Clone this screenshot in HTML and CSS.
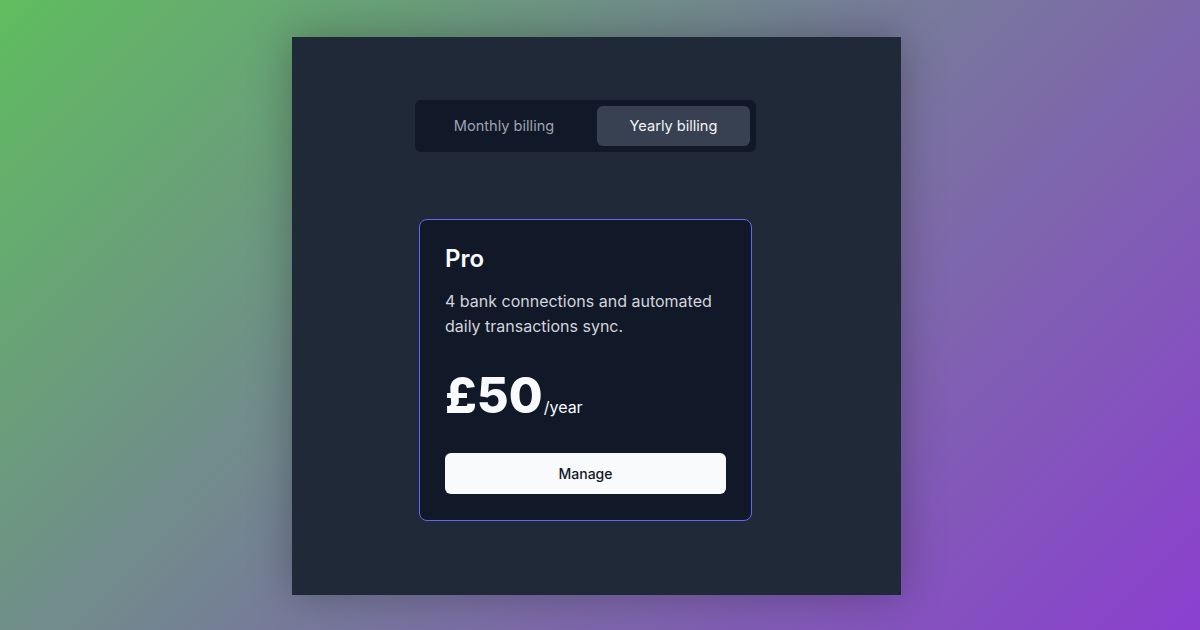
FILE: index.html
```html
<!DOCTYPE html>
<html lang="en">
<head>
<meta charset="utf-8">
<title>Pricing</title>
<link rel="stylesheet" href="styles.css">
</head>
<body>
  <main class="panel">
    <div class="column">
      <div class="toggle">
        <button class="toggle-btn">Monthly billing</button>
        <button class="toggle-btn active">Yearly billing</button>
      </div>
      <section class="card">
        <h2 class="plan-name">Pro</h2>
        <p class="plan-desc">4 bank connections and automated daily transactions sync.</p>
        <div class="price"><span class="amount">£50</span><span class="period">/year</span></div>
        <button class="manage">Manage</button>
      </section>
    </div>
  </main>
</body>
</html>
```
FILE: styles.css
```css
* { box-sizing: border-box; }
html, body { margin: 0; padding: 0; }
body {
  width: 1200px;
  height: 630px;
  overflow: hidden;
  font-family: Inter, "Noto Sans", sans-serif;
  background: linear-gradient(135deg, #5fbd5f 0%, #767d98 48%, #8b3fcf 100%);
  padding: 37px 0 0 292px;
  display: flex;
  align-items: flex-start;
}
.panel {
  width: 609px;
  height: 558px;
  background: #1f2937;
  box-shadow: 0 0 40px rgba(0, 0, 0, 0.28);
  padding: 63px 0 0 123px;
}
.column {
  width: 341px;
  display: flex;
  flex-direction: column;
  align-items: flex-start;
}
.toggle {
  width: 341px;
  display: flex;
  gap: 10px;
  padding: 6px;
  background: #111827;
  border-radius: 6px;
}
.toggle-btn {
  font-family: inherit;
  font-size: 14.6px;
  line-height: 22px;
  padding: 9px 0;
  border: 0;
  border-radius: 6px;
  background: transparent;
  color: #9ca3af;
  flex: 0 0 166px;
  cursor: pointer;
}
.toggle-btn.active {
  flex: 0 0 153px;
  background: #374151;
  color: #f3f4f6;
}
.card {
  margin: 67px 0 0 4px;
  width: 333px;
  background: #111827;
  border: 1px solid #6366f1;
  border-radius: 8px;
  padding: 23px 25px 26px 25px;
}
.plan-name {
  margin: 0;
  font-size: 24px;
  line-height: 32px;
  font-weight: 600;
  color: #f9fafb;
}
.plan-desc {
  margin: 14px 0 0;
  font-size: 16px;
  line-height: 25px;
  color: #d1d5db;
}
.price {
  margin-top: 33px;
  display: flex;
  align-items: baseline;
  color: #f9fafb;
}
.amount {
  font-size: 49px;
  line-height: 48px;
  font-weight: 800;
}
.period {
  font-size: 16px;
  line-height: 24px;
  margin-left: 1px;
}
.manage {
  margin-top: 33px;
  width: 100%;
  display: block;
  font-family: inherit;
  font-size: 14px;
  font-weight: 500;
  line-height: 21px;
  padding: 10px 0;
  border: 0;
  border-radius: 6px;
  background: #f9fafb;
  color: #111827;
}
```
